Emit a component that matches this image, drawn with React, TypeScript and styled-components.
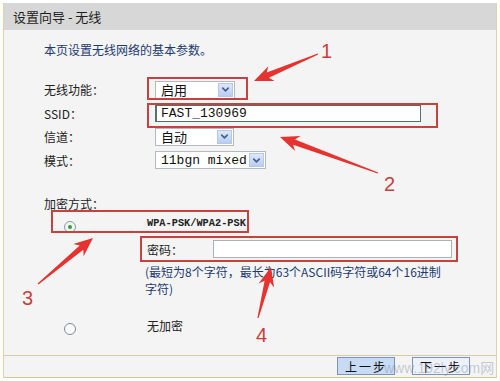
import React from 'react'
import styled, { createGlobalStyle } from 'styled-components'
import { ChevronDown } from 'lucide-react'

const GlobalStyle = createGlobalStyle`
  html, body {
    margin: 0;
    padding: 0;
    background: #ffffff;
  }
  * {
    box-sizing: border-box;
  }
`

const CJK = `'Noto Sans CJK SC', 'Liberation Sans', sans-serif`
const MONO = `'Liberation Mono', 'Noto Sans CJK SC', monospace`

const Page = styled.div`
  position: relative;
  width: 500px;
  height: 381px;
  overflow: hidden;
  background: #ffffff;
  font-family: ${CJK};
  color: #222;
`

const Panel = styled.div`
  margin: 3px 3px 0;
  height: 375px;
  display: flex;
  flex-flow: column nowrap;
  border-left: 1px solid #e4d2a6;
  border-right: 1px solid #e4d2a6;
  border-bottom: 1px solid #d9c69a;
  background: #f4f4f4;
`

const Header = styled.div`
  height: 27px;
  display: flex;
  align-items: center;
  padding-left: 9px;
  background: #d7d7d7;
  font-size: 13px;
  color: #1e1e1e;
`

const Body = styled.div`
  flex: 1;
  display: flex;
  flex-flow: column nowrap;
  padding: 12px 0 0 40px;
`

const Intro = styled.div`
  height: 16px;
  line-height: 16px;
  font-size: 12px;
  color: #1d3a70;
  margin-bottom: 20px;
`

const Row = styled.div<{ $h?: number }>`
  display: flex;
  align-items: center;
  height: ${(p) => p.$h ?? 23.5}px;
`

const Label = styled.span<{ $w?: number }>`
  width: ${(p) => p.$w ?? 111}px;
  font-size: 12px;
  color: #222;
  flex-shrink: 0;
`

const Select = styled.div<{ $w: number; $mono?: boolean }>`
  display: flex;
  align-items: center;
  width: ${(p) => p.$w}px;
  height: 18px;
  padding: 0 1px 0 5px;
  background: #ffffff;
  border: 1px solid #b3b9c2;
  font-family: ${(p) => (p.$mono ? MONO : CJK)};
  font-size: 13px;
  color: #111;
`

const SelectArrow = styled.span`
  margin-left: auto;
  width: 15px;
  height: 14px;
  display: flex;
  align-items: center;
  justify-content: center;
  background: linear-gradient(180deg, #dde7fb 0%, #b9cdf4 100%);
  border: 1px solid #b7c7ea;
  color: #4a5f88;
`

const TextInput = styled.div<{ $w: number; $dark?: boolean }>`
  display: flex;
  align-items: center;
  width: ${(p) => p.$w}px;
  height: 18px;
  padding-left: 4px;
  background: #ffffff;
  border: 1px solid ${(p) => (p.$dark ? '#56706f' : '#a9b1b8')};
  border-width: ${(p) => (p.$dark ? '2px 1px 1px 2px' : '1px')};
  font-family: ${MONO};
  font-size: 13px;
  color: #111;
`

const SectionTitle = styled.div`
  height: 16px;
  line-height: 16px;
  font-size: 12px;
  color: #222;
  margin-top: 24px;
`

const OptionRow = styled.div<{ $top: number }>`
  display: flex;
  align-items: center;
  height: 20px;
  margin-top: ${(p) => p.$top}px;
  padding-left: 20px;
`

const Radio = styled.span<{ $checked?: boolean }>`
  width: 12px;
  height: 12px;
  border-radius: 50%;
  border: 1px solid ${(p) => (p.$checked ? '#8a9aa6' : '#7d8c98')};
  background: ${(p) => (p.$checked ? '#f2f6f2' : '#fafafa')};
  display: flex;
  align-items: center;
  justify-content: center;
  flex-shrink: 0;
  margin-top: 4px;

  &::after {
    content: '';
    display: ${(p) => (p.$checked ? 'block' : 'none')};
    width: 4px;
    height: 4px;
    border-radius: 50%;
    background: #3b9a3b;
  }
`

const OptionText = styled.span<{ $mono?: boolean }>`
  margin-left: 71px;
  font-family: ${(p) => (p.$mono ? MONO : CJK)};
  font-size: ${(p) => (p.$mono ? 10.3 : 12)}px;
  font-weight: ${(p) => (p.$mono ? 700 : 400)};
  color: #222;
  margin-top: -4px;
`

const PasswordRow = styled.div`
  display: flex;
  align-items: center;
  height: 18px;
  margin-top: 5px;
  padding-left: 103px;
`

const Hint = styled.div`
  margin-top: 5px;
  padding-left: 101px;
  font-size: 12px;
  line-height: 17px;
  color: #1d3a70;
  white-space: nowrap;
`

const Footer = styled.div`
  height: 22px;
  display: flex;
  justify-content: flex-end;
  align-items: flex-start;
  gap: 17px;
  padding: 1px 26px 0 0;
  border-top: 1px solid #dccaa0;
`

const Button = styled.div<{ $light?: boolean }>`
  width: 58px;
  height: 18px;
  display: flex;
  align-items: center;
  justify-content: center;
  background: ${(p) => (p.$light ? '#eef2f8' : '#c8dbf4')};
  border: 1px solid #7b94bd;
  font-size: 12px;
  letter-spacing: 2px;
  color: #111;
`

const Watermark = styled.div`
  position: absolute;
  left: 384px;
  top: 357px;
  font-family: 'Liberation Sans', ${CJK};
  font-size: 14px;
  color: rgba(110, 125, 160, 0.38);
  pointer-events: none;
  white-space: nowrap;
`

const Overlay = styled.svg`
  position: absolute;
  left: 0;
  top: 0;
  pointer-events: none;
`

const Mark = styled.text`
  font-family: 'Liberation Sans', sans-serif;
  font-size: 20px;
  fill: #c9403b;
`

type Arrow = { x1: number; y1: number; x2: number; y2: number }

const arrows: Arrow[] = [
  { x1: 318, y1: 54, x2: 254, y2: 81 },
  { x1: 378, y1: 173, x2: 280, y2: 137 },
  { x1: 38, y1: 284, x2: 93, y2: 238 },
  { x1: 258, y1: 318, x2: 271, y2: 267 },
]

const boxes = [
  { x: 148, y: 78, w: 99, h: 21 },
  { x: 148, y: 104, w: 289, h: 23 },
  { x: 52, y: 211, w: 196, h: 21 },
  { x: 141, y: 237, w: 316, h: 24 },
]

const marks = [
  { t: '1', x: 321, y: 58 },
  { t: '2', x: 384, y: 191 },
  { t: '3', x: 22, y: 305 },
  { t: '4', x: 256, y: 342 },
]

// tapered arrow with a swept head, tail -> tip
const arrowPoints = ({ x1, y1, x2, y2 }: Arrow) => {
  const dx = x2 - x1
  const dy = y2 - y1
  const len = Math.hypot(dx, dy)
  const ux = dx / len
  const uy = dy / len
  const nx = -uy
  const ny = ux
  const head = 19
  const bx = x2 - ux * head
  const by = y2 - uy * head
  const sx = x2 - ux * (head - 4)
  const sy = y2 - uy * (head - 4)
  const pts: [number, number][] = [
    [x1 + nx * 0.6, y1 + ny * 0.6],
    [sx + nx * 2.8, sy + ny * 2.8],
    [bx + nx * 8, by + ny * 8],
    [x2, y2],
    [bx - nx * 8, by - ny * 8],
    [sx - nx * 2.8, sy - ny * 2.8],
    [x1 - nx * 0.6, y1 - ny * 0.6],
  ]
  return pts.map(([x, y]) => `${x.toFixed(1)},${y.toFixed(1)}`).join(' ')
}

const Annotations = () => (
  <Overlay width={500} height={381} viewBox="0 0 500 381">
    {boxes.map((b, i) => (
      <rect key={i} x={b.x} y={b.y} width={b.w} height={b.h} fill="none" stroke="#c8423d" strokeWidth={2} />
    ))}
    {arrows.map((a, i) => (
      <polygon key={i} points={arrowPoints(a)} fill="#e5332f" />
    ))}
    {marks.map((m) => (
      <Mark key={m.t} x={m.x} y={m.y}>
        {m.t}
      </Mark>
    ))}
  </Overlay>
)

const Arrow = () => (
  <SelectArrow>
    <ChevronDown size={11} strokeWidth={3.5} />
  </SelectArrow>
)

const App = () => {
  return (
    <Page>
      <GlobalStyle />
      <Panel>
        <Header>设置向导 - 无线</Header>
        <Body>
          <Intro>本页设置无线网络的基本参数。</Intro>
          <Row>
            <Label>无线功能：</Label>
            <Select $w={80}>
              启用
              <Arrow />
            </Select>
          </Row>
          <Row>
            <Label>SSID：</Label>
            <TextInput $w={266} $dark>
              FAST_130969
            </TextInput>
          </Row>
          <Row>
            <Label>信道：</Label>
            <Select $w={79}>
              自动
              <Arrow />
            </Select>
          </Row>
          <Row>
            <Label>模式：</Label>
            <Select $w={111} $mono>
              11bgn mixed
              <Arrow />
            </Select>
          </Row>
          <SectionTitle>加密方式：</SectionTitle>
          <OptionRow $top={3}>
            <Radio $checked />
            <OptionText $mono>WPA-PSK/WPA2-PSK</OptionText>
          </OptionRow>
          <PasswordRow>
            <Label $w={66}>密码：</Label>
            <TextInput $w={239} />
          </PasswordRow>
          <Hint>
            (最短为8个字符，最长为63个ASCII码字符或64个16进制
            <br />
            字符)
          </Hint>
          <OptionRow $top={20}>
            <Radio />
            <OptionText>无加密</OptionText>
          </OptionRow>
        </Body>
        <Footer>
          <Button>上一步</Button>
          <Button $light>下一步</Button>
        </Footer>
      </Panel>
      <Watermark>www.192ly.com网</Watermark>
      <Annotations />
    </Page>
  )
}

export default App
